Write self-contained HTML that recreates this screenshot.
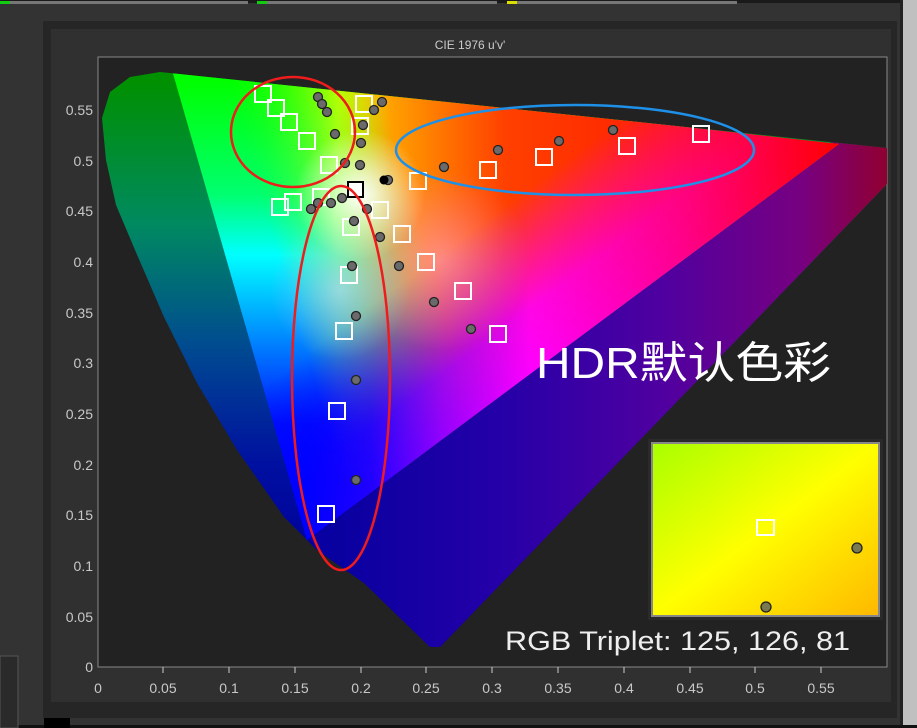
<!DOCTYPE html>
<html><head><meta charset="utf-8"><style>
html,body{margin:0;padding:0;width:917px;height:728px;overflow:hidden;background:#333;font-family:"Liberation Sans","Noto Sans CJK SC",sans-serif}
</style></head><body>
<svg width="917" height="728" viewBox="0 0 917 728" xmlns="http://www.w3.org/2000/svg" style="position:absolute;left:0;top:0">
<defs>
<clipPath id="hs2"><path d="M440,647 L430,647 L364,583 L317,550 L284,517 L237,450 L197,383 L164,317 L135,250 L116,205 L106,160 L102,118 L110,92 L130,77 L160,72 L887,148 L887,184 Z"/></clipPath>
<linearGradient id="lft" x1="0" y1="80" x2="0" y2="560" gradientUnits="userSpaceOnUse">
<stop offset="0" stop-color="#009000"/><stop offset="0.3" stop-color="#008a60"/><stop offset="0.55" stop-color="#004c90"/><stop offset="0.8" stop-color="#0010a0"/><stop offset="1" stop-color="#00009a"/></linearGradient>
<linearGradient id="btm" x1="330" y1="0" x2="887" y2="0" gradientUnits="userSpaceOnUse">
<stop offset="0" stop-color="#0800a0"/><stop offset="0.3" stop-color="#2400a8"/><stop offset="0.6" stop-color="#5000a0"/><stop offset="0.85" stop-color="#780080"/><stop offset="1" stop-color="#900030"/></linearGradient>
<linearGradient id="A" x1="0" y1="80" x2="0" y2="540" gradientUnits="userSpaceOnUse">
<stop offset="0" stop-color="#00ff00"/><stop offset="0.25" stop-color="#00ff70"/><stop offset="0.38" stop-color="#00ffff"/><stop offset="0.55" stop-color="#0090ff"/><stop offset="0.75" stop-color="#0010ff"/><stop offset="1" stop-color="#0000ff"/></linearGradient>
<linearGradient id="B" x1="170" y1="0" x2="840" y2="0" gradientUnits="userSpaceOnUse">
<stop offset="0" stop-color="#00ff00"/><stop offset="0.14" stop-color="#60ff00"/><stop offset="0.25" stop-color="#ffff00"/><stop offset="0.33" stop-color="#ffa000"/><stop offset="0.5" stop-color="#ff4000"/><stop offset="1" stop-color="#ff0000"/></linearGradient>
<linearGradient id="Bm" x1="290" y1="300" x2="430" y2="260" gradientUnits="userSpaceOnUse"><stop offset="0" stop-color="#fff" stop-opacity="0"/><stop offset="1" stop-color="#fff" stop-opacity="1"/></linearGradient>
<mask id="mB"><rect x="0" y="0" width="917" height="728" fill="url(#Bm)"/></mask>
<linearGradient id="C" x1="307" y1="0" x2="839" y2="0" gradientUnits="userSpaceOnUse">
<stop offset="0" stop-color="#0000ff"/><stop offset="0.12" stop-color="#2000ff"/><stop offset="0.25" stop-color="#9000ff"/><stop offset="0.42" stop-color="#ff00ff"/><stop offset="0.7" stop-color="#ff0090"/><stop offset="1" stop-color="#ff0000"/></linearGradient>
<linearGradient id="Cm" x1="500" y1="397" x2="410" y2="277" gradientUnits="userSpaceOnUse"><stop offset="0" stop-color="#fff" stop-opacity="1"/><stop offset="0.35" stop-color="#fff" stop-opacity="0.9"/><stop offset="1" stop-color="#fff" stop-opacity="0"/></linearGradient>
<mask id="mC"><rect x="0" y="0" width="917" height="728" fill="url(#Cm)"/></mask>
<radialGradient id="wh" cx="360" cy="195" r="65" gradientUnits="userSpaceOnUse"><stop offset="0" stop-color="#ffffff" stop-opacity="1"/><stop offset="0.4" stop-color="#ffffff" stop-opacity="0.6"/><stop offset="1" stop-color="#ffffff" stop-opacity="0"/></radialGradient>
<radialGradient id="lb" cx="340" cy="290" r="70" gradientUnits="userSpaceOnUse"><stop offset="0" stop-color="#c0d8ff" stop-opacity="0.6"/><stop offset="1" stop-color="#a0c0ff" stop-opacity="0"/></radialGradient>
<radialGradient id="pk" cx="440" cy="260" r="90" gradientUnits="userSpaceOnUse"><stop offset="0" stop-color="#ffa0ff" stop-opacity="0.5"/><stop offset="1" stop-color="#ff80ff" stop-opacity="0"/></radialGradient>
<linearGradient id="ins" x1="0" y1="0" x2="1" y2="1"><stop offset="0" stop-color="#a8ff00"/><stop offset="0.5" stop-color="#ffff00"/><stop offset="1" stop-color="#ffb800"/></linearGradient>
</defs>
<rect x="0" y="0" width="917" height="3" fill="#1a1a1a"/>
<rect x="0" y="1" width="248" height="3" fill="#777"/><rect x="257" y="1" width="240" height="3" fill="#777"/><rect x="507" y="1" width="230" height="3" fill="#777"/>
<rect x="0" y="1" width="10" height="3" fill="#1c1"/><rect x="257" y="1" width="10" height="3" fill="#1c1"/><rect x="507" y="1" width="10" height="3" fill="#dd0"/>
<rect x="903" y="0" width="14" height="728" fill="#c0c0c0"/><rect x="900" y="0" width="3" height="728" fill="#222"/>
<rect x="0" y="725" width="917" height="3" fill="#111"/>
<rect x="0" y="656" width="18" height="72" fill="#2a2a2a" stroke="#555"/>
<rect x="43" y="21" width="854" height="697" fill="#262626"/>
<rect x="51" y="29" width="840" height="673" fill="#303030"/>
<rect x="44" y="718" width="26" height="10" fill="#000"/>
<text x="470" y="49" fill="#ccc" font-size="12" text-anchor="middle">CIE 1976 u'v'</text>
<rect x="98" y="57" width="789" height="610" fill="#222" stroke="#888" stroke-width="1"/>
<g clip-path="url(#hs2)">
<rect x="90" y="60" width="800" height="600" fill="url(#lft)"/>
<polygon points="307,540 887,100 887,700 300,700" fill="url(#btm)"/>
<polygon points="172,70 839,144 307,540" fill="url(#A)"/>
<polygon points="172,70 839,144 307,540" fill="url(#B)" mask="url(#mB)"/>
<polygon points="172,70 839,144 307,540" fill="url(#C)" mask="url(#mC)"/>
<polygon points="172,70 839,144 307,540" fill="url(#pk)"/>
<polygon points="172,70 839,144 307,540" fill="url(#lb)"/>
<polygon points="172,70 839,144 307,540" fill="url(#wh)"/>
</g>
<g fill="#c8c8c8" font-size="14" text-anchor="end">
<text x="93" y="115">0.55</text><text x="93" y="166">0.5</text><text x="93" y="216">0.45</text><text x="93" y="267">0.4</text><text x="93" y="318">0.35</text><text x="93" y="368">0.3</text><text x="93" y="419">0.25</text><text x="93" y="470">0.2</text><text x="93" y="520">0.15</text><text x="93" y="571">0.1</text><text x="93" y="622">0.05</text><text x="93" y="672">0</text>
</g>
<g fill="#c8c8c8" font-size="14" text-anchor="middle">
<text x="98" y="693">0</text><text x="163" y="693">0.05</text><text x="229" y="693">0.1</text><text x="295" y="693">0.15</text><text x="361" y="693">0.2</text><text x="426" y="693">0.25</text><text x="492" y="693">0.3</text><text x="558" y="693">0.35</text><text x="624" y="693">0.4</text><text x="690" y="693">0.45</text><text x="755" y="693">0.5</text><text x="821" y="693">0.55</text>
</g>
<g stroke="#ccc" stroke-width="1">
<path d="M163,667v6M229,667v6M295,667v6M361,667v6M426,667v6M492,667v6M558,667v6M624,667v6M690,667v6M755,667v6M821,667v6"/>
</g>
<g fill="none" stroke="#fff" stroke-width="2">
<rect x="255" y="86" width="16" height="16"/><rect x="268" y="100" width="16" height="16"/><rect x="281" y="114" width="16" height="16"/><rect x="299" y="133" width="16" height="16"/><rect x="321" y="157" width="16" height="16"/>
<rect x="356" y="96" width="16" height="16"/><rect x="352" y="118" width="16" height="16"/><rect x="410" y="173" width="16" height="16"/><rect x="480" y="162" width="16" height="16"/><rect x="536" y="149" width="16" height="16"/><rect x="619" y="138" width="16" height="16"/><rect x="693" y="126" width="16" height="16"/>
<rect x="272" y="199" width="16" height="16"/><rect x="285" y="194" width="16" height="16"/><rect x="313" y="189" width="16" height="16"/><rect x="372" y="202" width="16" height="16"/><rect x="343" y="219" width="16" height="16"/><rect x="394" y="226" width="16" height="16"/><rect x="418" y="254" width="16" height="16"/><rect x="341" y="267" width="16" height="16"/><rect x="455" y="283" width="16" height="16"/><rect x="490" y="326" width="16" height="16"/><rect x="336" y="323" width="16" height="16"/><rect x="329" y="403" width="16" height="16"/><rect x="318" y="506" width="16" height="16"/>
</g>
<rect x="348" y="182" width="15" height="15" fill="#fff" stroke="#000" stroke-width="2"/>
<g fill="#6a6a6a" stroke="#222" stroke-width="1.3">
<circle cx="318" cy="97" r="4.5"/><circle cx="322" cy="104" r="4.5"/><circle cx="327" cy="112" r="4.5"/><circle cx="335" cy="134" r="4.5"/><circle cx="345" cy="163" r="4.5"/><circle cx="361" cy="143" r="4.5"/><circle cx="363" cy="125" r="4.5"/><circle cx="374" cy="110" r="4.5"/><circle cx="382" cy="102" r="4.5"/><circle cx="360" cy="165" r="4.5"/><circle cx="444" cy="167" r="4.5"/><circle cx="498" cy="150" r="4.5"/><circle cx="559" cy="141" r="4.5"/><circle cx="613" cy="130" r="4.5"/>
<circle cx="311" cy="209" r="4.5"/><circle cx="318" cy="203" r="4.5"/><circle cx="331" cy="203" r="4.5"/><circle cx="342" cy="198" r="4.5"/><circle cx="367" cy="209" r="4.5"/><circle cx="354" cy="221" r="4.5"/><circle cx="380" cy="237" r="4.5"/><circle cx="352" cy="266" r="4.5"/><circle cx="399" cy="266" r="4.5"/><circle cx="434" cy="302" r="4.5"/><circle cx="356" cy="316" r="4.5"/><circle cx="471" cy="329" r="4.5"/><circle cx="356" cy="380" r="4.5"/><circle cx="356" cy="480" r="4.5"/><circle cx="388" cy="180" r="4.5"/>
</g>
<circle cx="384" cy="180" r="4.5" fill="#000"/>
<circle cx="356" cy="190" r="5" fill="#fff"/>
<g fill="none" stroke-width="2.5">
<ellipse cx="293" cy="132" rx="62" ry="55" stroke="#ee1c1c"/>
<ellipse cx="575" cy="150" rx="179" ry="45" stroke="#1e90e8"/>
<ellipse cx="341" cy="378" rx="49" ry="192" stroke="#ee1c1c"/>
</g>
<text x="536" y="378" fill="#fff" font-size="44" textLength="295" lengthAdjust="spacingAndGlyphs">HDR默认色彩</text>
<rect x="648" y="439" width="235" height="181" fill="#2a2a2a"/>
<rect x="652" y="443" width="227" height="173" fill="url(#ins)" stroke="#888" stroke-width="2"/>
<rect x="757" y="520" width="17" height="15" fill="none" stroke="#fff" stroke-width="2"/>
<circle cx="857" cy="548" r="5" fill="#7a7a50" stroke="#222" stroke-width="1.3"/>
<circle cx="766" cy="607" r="5" fill="#7a7a50" stroke="#222" stroke-width="1.3"/>
<text x="505" y="650" fill="#eee" font-size="27" textLength="345" lengthAdjust="spacingAndGlyphs">RGB Triplet: 125, 126, 81</text>
</svg>
</body></html>
